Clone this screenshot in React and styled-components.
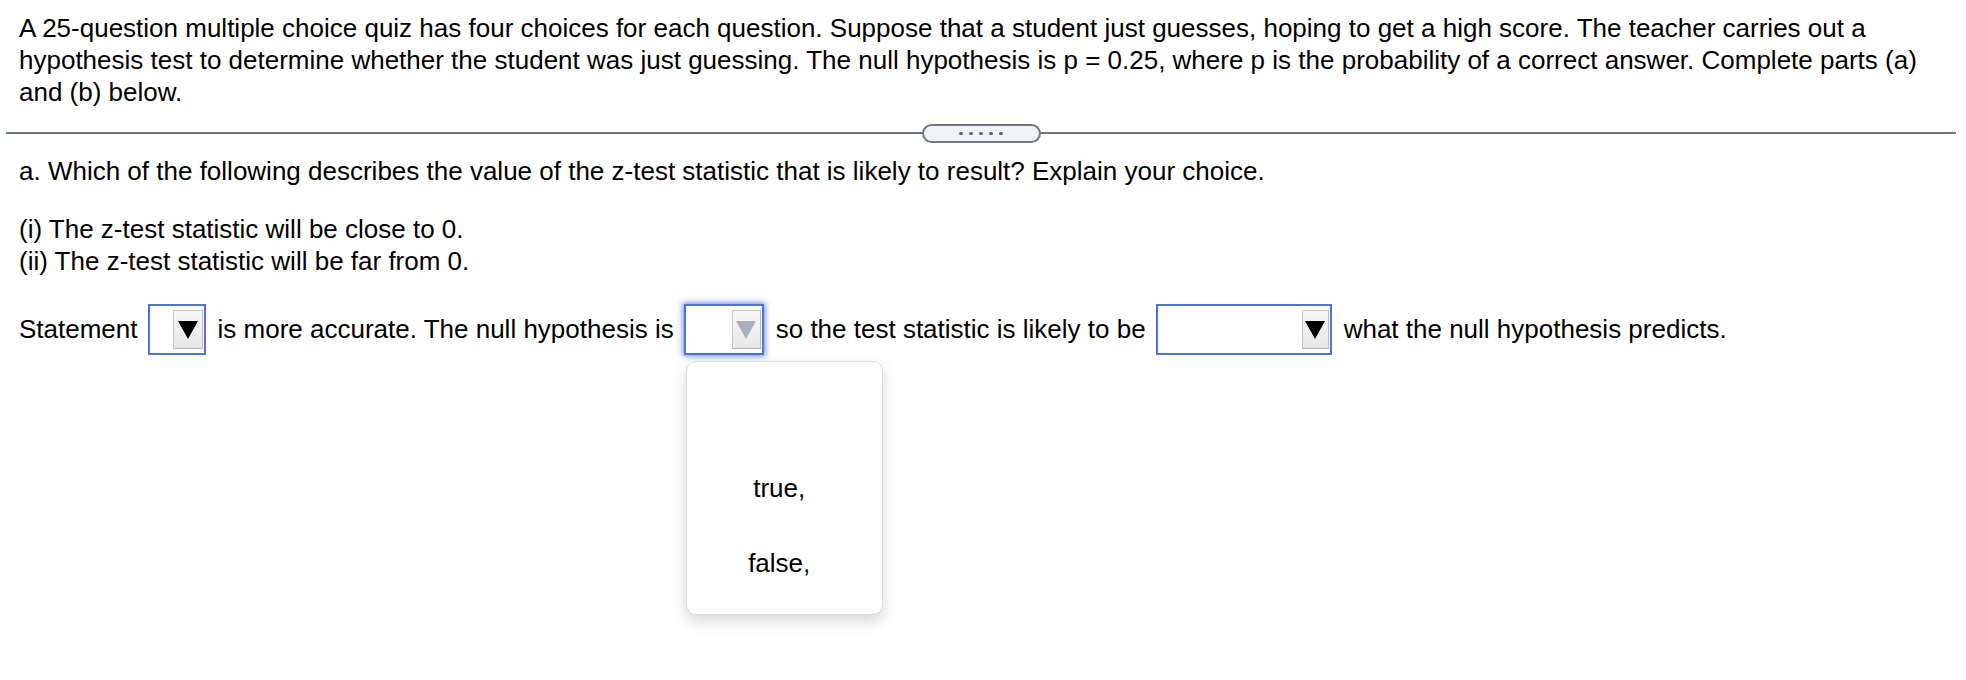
import styled, { createGlobalStyle } from "styled-components";

const GlobalStyle = createGlobalStyle`
  html, body, #root {
    min-height: 100%;
    height: 100%;
  }
  body {
    margin: 0;
    background: #ffffff;
    color: #000000;
    font-family: "Liberation Sans", Arial, sans-serif;
  }
`;

const Page = styled.div`
  box-sizing: border-box;
  min-height: 680px;
  padding: 12px 10px 0 6px;
  font-size: 26px;
  line-height: 32px;
`;

const Block = styled.div`
  padding-left: 13px;
  padding-right: 6px;
  margin-top: ${(p) => p.$top || 0}px;
`;

const Line = styled.div`
  white-space: nowrap;
`;

const Divider = styled.div`
  position: relative;
  height: 19px;
  margin-top: 16px;
  display: flex;
  justify-content: center;
  align-items: center;
  &::before {
    content: "";
    position: absolute;
    left: 0;
    right: 0;
    top: 8px;
    height: 2px;
    background: #6f7986;
  }
`;

const Pill = styled.div`
  position: relative;
  width: 115px;
  height: 15px;
  border: 2px solid #6f7986;
  border-radius: 10px;
  background: #f2f3f6;
  display: flex;
  justify-content: center;
  align-items: center;
  gap: 6.5px;
`;

const Dot = styled.span`
  width: 3.5px;
  height: 3.5px;
  border-radius: 50%;
  background: #5d6571;
`;

const Row = styled.div`
  display: flex;
  align-items: center;
  padding-left: 13px;
  margin-top: 27px;
  white-space: nowrap;
`;

const Text = styled.span`
  margin-bottom: 2px;
`;

const SelectWrap = styled.div`
  position: relative;
  margin: 0 12px 0 10px;
`;

const SelectBox = styled.div`
  box-sizing: border-box;
  width: ${(p) => p.$width}px;
  height: 51px;
  border: 2px solid #4f74cb;
  background: #fff;
  display: flex;
  justify-content: flex-end;
  align-items: center;
  padding-right: 1px;
  box-shadow: ${(p) => (p.$focused ? "0 0 6px 1px rgba(70, 112, 214, 0.85)" : "none")};
`;

const ArrowButton = styled.div`
  box-sizing: border-box;
  width: ${(p) => p.$width}px;
  height: 39px;
  border: 1px solid #c6c6c6;
  border-right-color: #bdbdbd;
  border-bottom-color: #b5b5b5;
  background: linear-gradient(#f8f8f8, #e7e7e7);
  display: flex;
  justify-content: center;
  align-items: center;
`;

const Triangle = styled.span`
  width: 0;
  height: 0;
  border-left: 10px solid transparent;
  border-right: 10px solid transparent;
  border-top: 18px solid ${(p) => (p.$muted ? "#a7afbf" : "#000")};
`;

const Menu = styled.ul`
  position: absolute;
  top: 57px;
  left: 2px;
  margin: 0;
  list-style: none;
  box-sizing: border-box;
  width: 197px;
  padding: 13px 10px 14px 0;
  background: #fff;
  border: 1px solid #dcdcdc;
  border-radius: 10px;
  box-shadow: 0 6px 16px rgba(0, 0, 0, 0.16);
  z-index: 5;
`;

const Option = styled.li`
  height: 75px;
  display: flex;
  align-items: center;
  justify-content: center;
`;

function Select({ width, buttonWidth, focused, options }) {
  return (
    <SelectWrap>
      <SelectBox $width={width} $focused={focused}>
        <ArrowButton $width={buttonWidth}>
          <Triangle $muted={focused} />
        </ArrowButton>
      </SelectBox>
      {options ? (
        <Menu>
          {options.map((o, i) => (
            <Option key={i}>{o}</Option>
          ))}
        </Menu>
      ) : null}
    </SelectWrap>
  );
}

const choices = ["", "true,", "false,"];

export default function App() {
  return (
    <>
      <GlobalStyle />
      <Page>
        <Block>
          A 25-question multiple choice quiz has four choices for each question. Suppose that a
          student just guesses, hoping to get a high score. The teacher carries out a hypothesis
          test to determine whether the student was just guessing. The null hypothesis is p = 0.25,
          where p is the probability of a correct answer. Complete parts (a) and (b) below.
        </Block>
        <Divider>
          <Pill>
            <Dot />
            <Dot />
            <Dot />
            <Dot />
            <Dot />
          </Pill>
        </Divider>
        <Block $top={12}>
          <Line>
            a. Which of the following describes the value of the z-test statistic that is likely to
            result? Explain your choice.
          </Line>
        </Block>
        <Block $top={26}>
          <Line>(i) The z-test statistic will be close to 0.</Line>
          <Line>(ii) The z-test statistic will be far from 0.</Line>
        </Block>
        <Row>
          <Text>Statement</Text>
          <Select width={58} buttonWidth={30} />
          <Text>is more accurate. The null hypothesis is</Text>
          <Select width={80} buttonWidth={29} focused options={choices} />
          <Text>so the test statistic is likely to be</Text>
          <Select width={176} buttonWidth={27} />
          <Text>what the null hypothesis predicts.</Text>
        </Row>
      </Page>
    </>
  );
}
